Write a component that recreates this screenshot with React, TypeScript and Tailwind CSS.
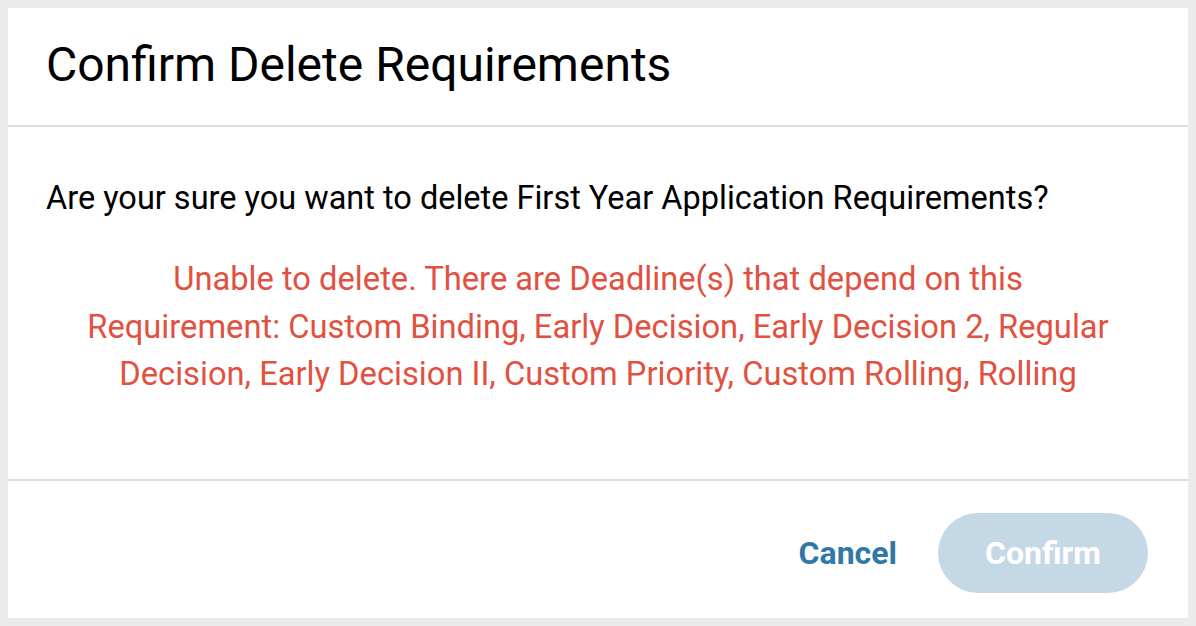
import React from 'react';

const dependents = [
  'Custom Binding',
  'Early Decision',
  'Early Decision 2',
  'Regular Decision',
  'Early Decision II',
  'Custom Priority',
  'Custom Rolling',
  'Rolling',
];

const App: React.FC = () => {
  return (
    <div className="min-h-screen bg-[#ebebeb] p-2" style={{ fontFamily: 'Roboto, "Noto Sans", sans-serif' }}>
      <div className="bg-white flex flex-col h-[610px]">
        {/* Header */}
        <div className="h-[119px] flex items-center px-[38px] pb-[4px] border-b-2 border-[#dedede]">
          <h1 className="text-[48px] text-black leading-none">Confirm Delete Requirements</h1>
        </div>

        {/* Body */}
        <div className="flex-1 px-[38px] pt-[51px] border-b-2 border-[#dedede]">
          <p className="text-[32.5px] text-black leading-[40px]">
            Are your sure you want to delete First Year Application Requirements?
          </p>
          <p className="mt-[38px] mx-auto w-[1032px] text-[32.7px] leading-[47.5px] text-[#e2513f] text-center">
            Unable to delete. There are Deadline(s) that depend on this Requirement: {dependents.join(', ')}
          </p>
        </div>

        {/* Footer */}
        <div className="h-[137px] flex items-start justify-end gap-[41px] pt-[32px] pr-[40px]">
          <button className="h-[80px] text-[32px] font-bold text-[#2f78a8]">Cancel</button>
          <button
            disabled
            className="h-[80px] w-[210px] rounded-full bg-[#c5d8e6] text-white text-[32px] font-bold"
          >
            Confirm
          </button>
        </div>
      </div>
    </div>
  );
};

export default App;
